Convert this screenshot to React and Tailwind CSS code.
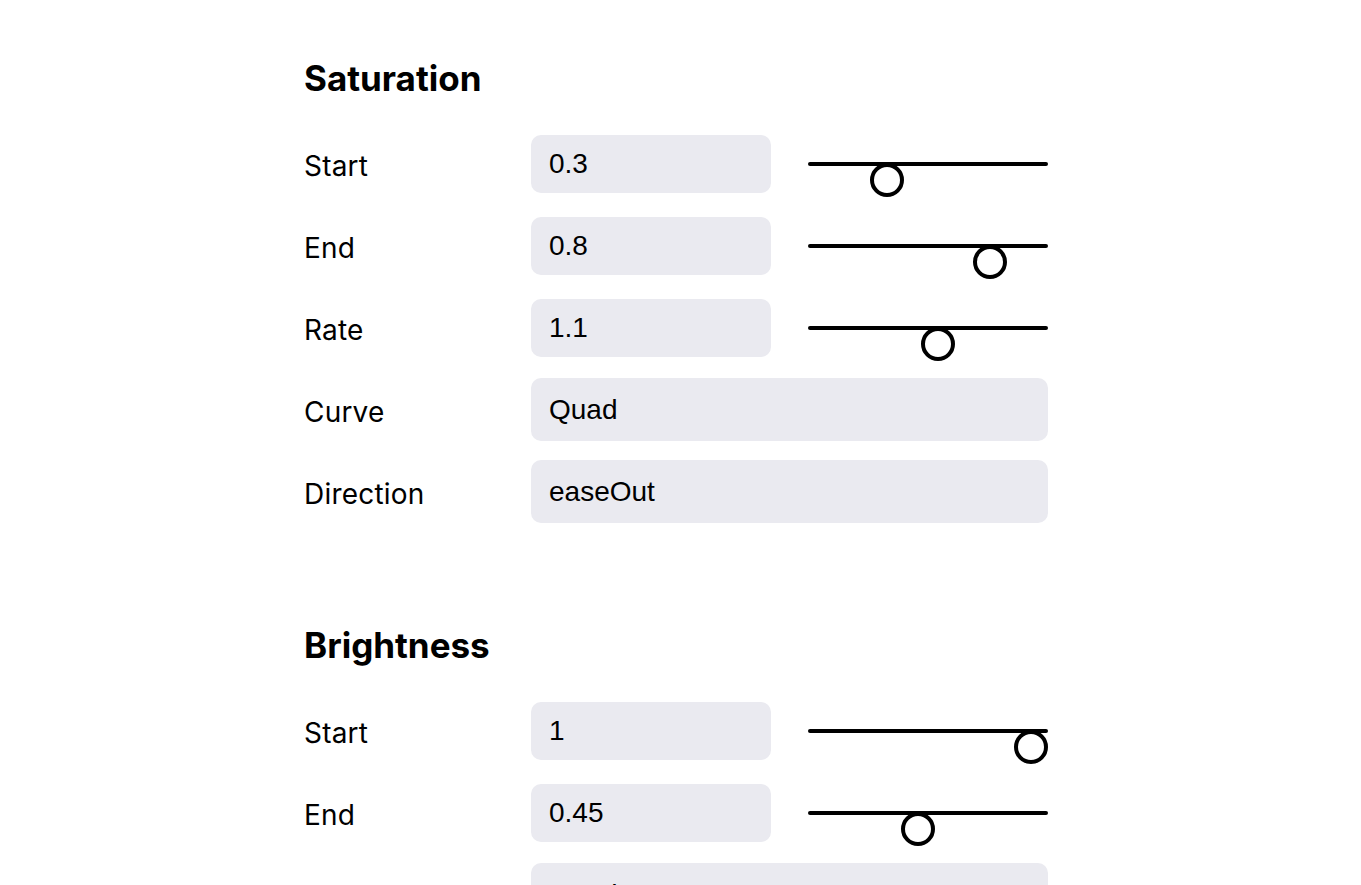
const saturation = [
    { label: 'Start', value: '0.3', min: 0, max: 1 },
    { label: 'End', value: '0.8', min: 0, max: 1 },
    { label: 'Rate', value: '1.1', min: 0, max: 2 },
    { label: 'Curve', value: 'Quad' },
    { label: 'Direction', value: 'easeOut' },
];

const brightness = [
    { label: 'Start', value: '1', min: 0, max: 1 },
    { label: 'End', value: '0.45', min: 0, max: 1 },
    { label: 'Curve', value: 'Quad' },
    { label: 'Direction', value: 'easeOut' },
];

const Slider = ({ value, min, max }) => {
    const pct = (parseFloat(value) - min) / (max - min);
    return (
        <div className="relative w-[240px] h-full shrink-0">
            <div className="absolute left-0 right-0 top-[29.5px] h-[4px] rounded-full bg-black" />
            <div
                className="absolute top-[31px] w-[34px] h-[34px] rounded-full border-4 border-black bg-white"
                style={{ left: `${pct * (240 - 34)}px` }}
            />
        </div>
    );
};

const Row = ({ item }) => {
    const numeric = item.min !== undefined;
    return (
        <div className="flex items-center h-[63px]">
            <div className="w-[227px] shrink-0 pt-[5px] text-[28px] tracking-[0.2px] text-black" style={{ fontFamily: 'Inter, sans-serif' }}>
                {item.label}
            </div>
            {numeric ? (
                <>
                    <div className="w-[240px] h-[58px] rounded-[10px] bg-[#eaeaf0] flex items-center px-[18px] text-[28px] text-black font-['Liberation_Sans',sans-serif] shrink-0">
                        {item.value}
                    </div>
                    <div className="w-[37px] shrink-0" />
                    <Slider value={item.value} min={item.min} max={item.max} />
                </>
            ) : (
                <div className="w-[517px] h-[63px] rounded-[10px] bg-[#eaeaf0] flex items-center px-[18px] text-[28px] text-black font-['Liberation_Sans',sans-serif] shrink-0">
                    {item.value}
                </div>
            )}
        </div>
    );
};

const Section = ({ title, items }) => (
    <section className="mb-[100px]">
        <h2 className="text-[35px] leading-[44px] font-bold text-black mb-[32px]" style={{ fontFamily: 'Inter, sans-serif' }}>
            {title}
        </h2>
        <div className="flex flex-col gap-[19px]">
            {items.map((item, i) => (
                <Row key={i} item={item} />
            ))}
        </div>
    </section>
);

const App = () => {
    return (
        <div className="w-[1361px] h-[885px] overflow-hidden bg-white">
            <div className="pl-[304px] pt-[56px]">
                <Section title="Saturation" items={saturation} />
                <Section title="Brightness" items={brightness} />
            </div>
        </div>
    );
};

export default App;
